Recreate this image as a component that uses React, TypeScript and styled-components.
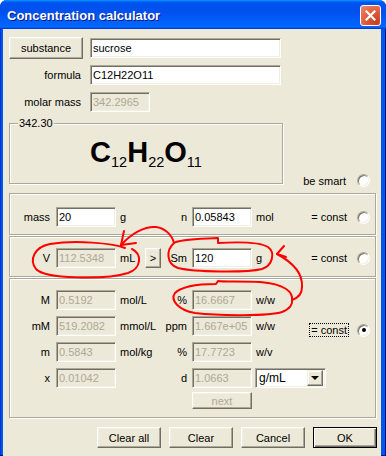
import React from 'react';
import styled, { createGlobalStyle } from 'styled-components';

const GlobalStyle = createGlobalStyle`
  html, body {
    margin: 0;
    padding: 0;
  }
  body {
    font-family: "Liberation Sans", Arial, sans-serif;
    font-size: 11px;
    color: #000;
  }
`;

const Window = styled.div`
  position: relative;
  width: 386px;
  height: 456px;
  display: flex;
  flex-direction: column;
  background: #0055ea;
  border-radius: 7px 7px 0 0;
  box-shadow: inset -1px -1px 0 #00138c, inset 1px 0 0 #0831d9;
  overflow: hidden;
`;

const TitleBar = styled.div`
  height: 29px;
  flex: none;
  display: flex;
  align-items: flex-start;
  justify-content: space-between;
  padding: 0 5px 0 7px;
  background: linear-gradient(
    180deg,
    #0997ff,
    #0053ee 8%,
    #0050ee 40%,
    #06f 88%,
    #06f 93%,
    #005bff 95%,
    #003dd7 96%,
    #003dd7
  );
`;

const Title = styled.span`
  margin-top: 8px;
  font: bold 13px "Liberation Sans", Arial, sans-serif;
  color: #fff;
  text-shadow: 1px 1px 0 #0a1883;
`;

const CloseButton = styled.div`
  margin-top: 5px;
  width: 21px;
  height: 21px;
  box-sizing: border-box;
  border: 1px solid #fff;
  border-radius: 3px;
  background: radial-gradient(circle at 80% 85%, #c3401f, #e0583a 45%, #e98a70);
  display: flex;
  align-items: center;
  justify-content: center;
`;

const Body = styled.div`
  flex: 1;
  margin: 0 5px 3px 3px;
  padding: 8px 4px 8px 6px;
  background: #ece9d8;
  display: flex;
  flex-direction: column;
`;

const TopGrid = styled.div`
  display: grid;
  grid-template-columns: 74px 191px;
  grid-auto-rows: 22px;
  column-gap: 7px;
  row-gap: 5px;
  align-items: center;
`;

const Label = styled.span<{ $pad?: number }>`
  text-align: right;
  padding-right: ${(p) => p.$pad ?? 2}px;
  white-space: nowrap;
`;

const Field = styled.input<{ $w?: number }>`
  width: ${(p) => (p.$w ? `${p.$w}px` : '100%')};
  height: 20px;
  box-sizing: border-box;
  margin: 0;
  padding: 0 2px;
  font: 11px "Liberation Sans", Arial, sans-serif;
  color: #000;
  background: #fff;
  border: 1px solid;
  border-color: #aca899 #fff #fff #aca899;
  box-shadow: inset 1px 1px 0 #716f64, inset -1px -1px 0 #f1efe2;
  outline: none;

  &:disabled {
    background: #ece9d8;
    color: #aca899;
  }
`;

const PushButton = styled.button<{ $w?: number; $h?: number; $default?: boolean }>`
  width: ${(p) => p.$w ?? 64}px;
  height: ${(p) => p.$h ?? 21}px;
  box-sizing: border-box;
  margin: 0;
  padding: 0;
  font: 11px "Liberation Sans", Arial, sans-serif;
  color: #000;
  background: #ece9d8;
  border: 1px solid;
  border-color: ${(p) => (p.$default ? '#000' : '#fff #716f64 #716f64 #fff')};
  box-shadow: ${(p) =>
    p.$default
      ? 'inset 1px 1px 0 #fff, inset -1px -1px 0 #716f64, inset -2px -2px 0 #aca899'
      : 'inset -1px -1px 0 #aca899, inset 1px 1px 0 #f1efe2'};

  &:disabled {
    color: #aca899;
  }
`;

const FormulaRow = styled.div`
  display: flex;
  align-items: flex-end;
  margin-top: 10px;
`;

const GroupFrame = styled.div`
  position: relative;
  width: 274px;
  height: 61px;
  box-sizing: border-box;
  border: 1px solid #aca899;
  box-shadow: inset 1px 1px 0 #fff, 1px 1px 0 #fff;
  display: flex;
  align-items: center;
  justify-content: center;
  padding-bottom: 4px;
`;

const Legend = styled.span`
  position: absolute;
  top: -7px;
  left: 8px;
  padding: 0 1px;
  line-height: 13px;
  background: #ece9d8;
`;

const FormulaText = styled.div`
  font: bold 29px "Liberation Sans", Arial, sans-serif;
  line-height: 32px;

  sub {
    font-size: 14.5px;
    font-weight: normal;
    line-height: 0;
    vertical-align: -5px;
  }
`;

const Smart = styled.div`
  flex: 1;
  display: flex;
  align-items: center;
  justify-content: flex-end;
  gap: 11px;
  padding-right: 7px;
  margin-bottom: -3px;
`;

const Radio = styled.span<{ $checked?: boolean }>`
  flex: none;
  width: 13px;
  height: 13px;
  box-sizing: border-box;
  border-radius: 50%;
  background: #fff;
  border: 1px solid;
  border-color: #aca899 #fff #fff #aca899;
  box-shadow: inset 1px 1px 0 #716f64, inset -1px -1px 0 #f1efe2;
  display: flex;
  align-items: center;
  justify-content: center;

  &::after {
    content: '';
    display: ${(p) => (p.$checked ? 'block' : 'none')};
    width: 4px;
    height: 4px;
    border-radius: 50%;
    background: #000;
  }
`;

const Panel = styled.div<{ $top: number; $pt: number; $pb: number }>`
  margin: ${(p) => p.$top}px 1px 0 0;
  padding: ${(p) => p.$pt}px 0 ${(p) => p.$pb}px;
  border: 1px solid #aca899;
  box-shadow: inset 1px 1px 0 #fff, 1px 1px 0 #fff;
`;

const PanelGrid = styled.div`
  display: grid;
  grid-template-columns: 46px 60px 46px 30px 60px 56px 1fr;
  grid-auto-rows: 20px;
  row-gap: 6px;
  align-items: center;
`;

const Unit = styled.span`
  padding-left: 4px;
  white-space: nowrap;
  display: flex;
  align-items: center;
`;

const ArrowButton = styled(PushButton)`
  margin-left: auto;
  margin-right: 1px;
`;

const ConstOption = styled.div<{ $shift?: number }>`
  justify-self: end;
  display: flex;
  align-items: center;
  gap: 9px;
  padding-right: 5px;
  margin-top: ${(p) => p.$shift ?? 0}px;
  white-space: nowrap;
`;

const ConstText = styled.span<{ $focused?: boolean }>`
  line-height: 12px;
  padding: 0 1px;
  outline: ${(p) => (p.$focused ? '1px dotted #000' : 'none')};
`;

const NextButton = styled(PushButton)`
  grid-column: 5;
  align-self: start;
  margin-top: -2px;
`;

const Select = styled.div`
  grid-column: 6 / span 2;
  justify-self: start;
  margin-left: 3px;
  width: 71px;
  height: 20px;
  box-sizing: border-box;
  display: flex;
  align-items: center;
  justify-content: space-between;
  padding: 0 2px 0 3px;
  background: #fff;
  border: 1px solid;
  border-color: #aca899 #fff #fff #aca899;
  box-shadow: inset 1px 1px 0 #716f64, inset -1px -1px 0 #f1efe2;
  font-size: 12px;
`;

const DropButton = styled.span`
  width: 16px;
  height: 16px;
  box-sizing: border-box;
  background: #ece9d8;
  border: 1px solid;
  border-color: #f1efe2 #716f64 #716f64 #f1efe2;
  box-shadow: inset -1px -1px 0 #aca899, inset 1px 1px 0 #fff;
  display: flex;
  align-items: center;
  justify-content: center;

  &::after {
    content: '';
    border-left: 4px solid transparent;
    border-right: 4px solid transparent;
    border-top: 4px solid #000;
  }
`;

const ButtonBar = styled.div`
  margin-top: 9px;
  display: flex;
  justify-content: flex-end;
  gap: 8px;
`;

const Annotations = styled.svg`
  position: absolute;
  left: 0;
  top: 0;
  width: 386px;
  height: 456px;
  pointer-events: none;

  path {
    fill: none;
    stroke: #f00;
    stroke-width: 2;
    stroke-linecap: round;
    stroke-linejoin: round;
  }
`;

const concRows = [
  { l: 'M', v: '0.5192', u: 'mol/L', l2: '%', v2: '16.6667', u2: 'w/w' },
  { l: 'mM', v: '519.2082', u: 'mmol/L', l2: 'ppm', v2: '1.667e+05', u2: 'w/w' },
  { l: 'm', v: '0.5843', u: 'mol/kg', l2: '%', v2: '17.7723', u2: 'w/v' },
];

function Const({ checked, focused, shift }: { checked?: boolean; focused?: boolean; shift?: number }) {
  return (
    <ConstOption $shift={shift}>
      <ConstText $focused={focused}>= const</ConstText>
      <Radio $checked={checked} />
    </ConstOption>
  );
}

export default function App() {
  return (
    <>
      <GlobalStyle />
      <Window>
        <TitleBar>
          <Title>Concentration calculator</Title>
          <CloseButton>
            <svg width="11" height="11" viewBox="0 0 11 11">
              <path d="M1.5 1.5 L9.5 9.5 M9.5 1.5 L1.5 9.5" stroke="#fff" strokeWidth="2.2" strokeLinecap="square" />
            </svg>
          </CloseButton>
        </TitleBar>

        <Body>
          <TopGrid>
            <PushButton $w={74} $h={22}>substance</PushButton>
            <Field value="sucrose" readOnly />
            <Label>formula</Label>
            <Field value="C12H22O11" readOnly />
            <Label>molar mass</Label>
            <Field $w={60} value="342.2965" disabled />
          </TopGrid>

          <FormulaRow>
            <GroupFrame>
              <Legend>342.30</Legend>
              <FormulaText>
                C<sub>12</sub>H<sub>22</sub>O<sub>11</sub>
              </FormulaText>
            </GroupFrame>
            <Smart>
              <span>be smart</span>
              <Radio />
            </Smart>
          </FormulaRow>

          <Panel $top={9} $pt={13} $pb={7}>
            <PanelGrid>
              <Label $pad={6}>mass</Label>
              <Field value="20" readOnly />
              <Unit>g</Unit>
              <Label $pad={5}>n</Label>
              <Field value="0.05843" readOnly />
              <Unit>mol</Unit>
              <Const />
            </PanelGrid>
          </Panel>

          <Panel $top={1} $pt={11} $pb={8}>
            <PanelGrid>
              <Label $pad={6}>V</Label>
              <Field value="112.5348" disabled />
              <Unit>
                mL
                <ArrowButton $w={16} $h={20}>&gt;</ArrowButton>
              </Unit>
              <Label $pad={5}>Sm</Label>
              <Field value="120" readOnly />
              <Unit>g</Unit>
              <Const />
            </PanelGrid>
          </Panel>

          <Panel $top={1} $pt={11} $pb={3}>
            <PanelGrid>
              {concRows.map((r, i) => (
                <React.Fragment key={r.v}>
                  <Label $pad={6}>{r.l}</Label>
                  <Field value={r.v} disabled />
                  <Unit>{r.u}</Unit>
                  <Label $pad={5}>{r.l2}</Label>
                  <Field value={r.v2} disabled />
                  <Unit>{r.u2}</Unit>
                  {i === 1 ? <Const checked focused shift={8} /> : <span />}
                </React.Fragment>
              ))}
              <Label $pad={6}>x</Label>
              <Field value="0.01042" disabled />
              <span />
              <Label $pad={5}>d</Label>
              <Field value="1.0663" disabled />
              <Select>
                <span>g/mL</span>
                <DropButton />
              </Select>
              <NextButton $w={60} $h={17} disabled>
                next
              </NextButton>
            </PanelGrid>
          </Panel>

          <ButtonBar>
            <PushButton>Clear all</PushButton>
            <PushButton>Clear</PushButton>
            <PushButton>Cancel</PushButton>
            <PushButton $default>OK</PushButton>
          </ButtonBar>
        </Body>

        <Annotations viewBox="0 0 386 456">
          <path d="M125 248 C112 243, 75 240, 50 244 C34 247, 29 260, 36 269 C45 279, 105 280, 128 273 C142 268, 142 254, 132 249" />
          <path d="M174 243 C172 235, 165 228, 156 227 C145 226, 132 233, 121 245" />
          <path d="M124 231 L121 245 L136 243" />
          <path d="M174 243 C180 239, 200 239, 218 238 L218 243 C235 242, 258 241, 268 247 C276 253, 272 266, 262 269 C245 273, 195 272, 178 268 C166 264, 166 250, 174 243" />
          <path d="M277 254 C292 262, 303 272, 302 287 C302 294, 298 298, 292 300" />
          <path d="M284 246 L277 254 L286 257" />
          <path d="M292 300 C293 292, 285 284, 260 282 C240 281, 224 282, 218 281 L216 284 C200 284, 182 286, 175 293 C170 300, 178 310, 195 313 C220 316, 270 316, 282 312 C290 309, 293 304, 292 300" />
        </Annotations>
      </Window>
    </>
  );
}
